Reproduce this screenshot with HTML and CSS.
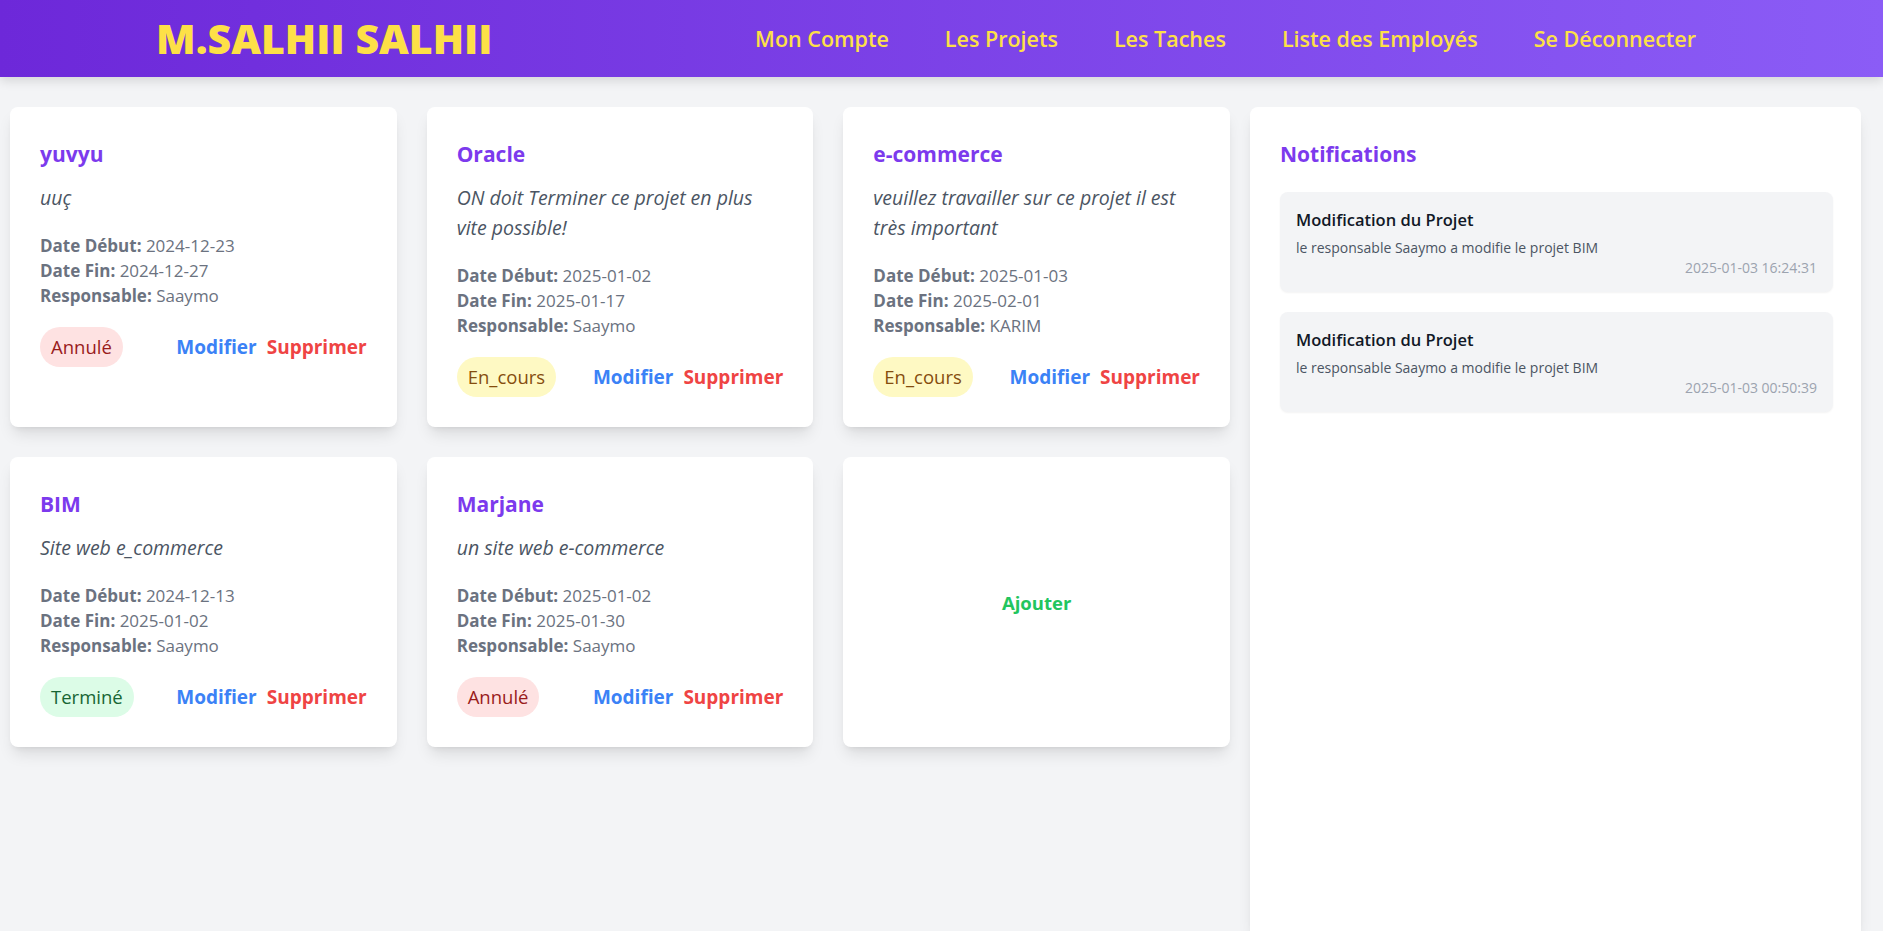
FILE: index.html
```html
<!DOCTYPE html>
<html lang="fr">
<head>
<meta charset="utf-8">
<title>Projets</title>
<link rel="stylesheet" href="styles.css">
</head>
<body>
<header class="topbar">
  <div class="logo">M.SALHII SALHII</div>
  <nav class="nav">
    <a href="#">Mon Compte</a>
    <a href="#">Les Projets</a>
    <a href="#">Les Taches</a>
    <a href="#">Liste des Employés</a>
    <a href="#">Se Déconnecter</a>
  </nav>
</header>
<main class="layout">
  <section class="grid">
    <article class="card">
      <h2 class="card-title">yuvyu</h2>
      <p class="card-desc">uuç</p>
      <div class="card-meta">
        <div><b>Date Début:</b> 2024-12-23</div>
        <div><b>Date Fin:</b> 2024-12-27</div>
        <div><b>Responsable:</b> Saaymo</div>
      </div>
      <div class="card-foot">
        <span class="pill pill-red">Annulé</span>
        <div class="actions"><a href="#" class="edit">Modifier</a><a href="#" class="del">Supprimer</a></div>
      </div>
    </article>
    <article class="card">
      <h2 class="card-title">Oracle</h2>
      <p class="card-desc">ON doit Terminer ce projet en plus vite possible!</p>
      <div class="card-meta">
        <div><b>Date Début:</b> 2025-01-02</div>
        <div><b>Date Fin:</b> 2025-01-17</div>
        <div><b>Responsable:</b> Saaymo</div>
      </div>
      <div class="card-foot">
        <span class="pill pill-yellow">En_cours</span>
        <div class="actions"><a href="#" class="edit">Modifier</a><a href="#" class="del">Supprimer</a></div>
      </div>
    </article>
    <article class="card">
      <h2 class="card-title">e-commerce</h2>
      <p class="card-desc">veuillez travailler sur ce projet il est très important</p>
      <div class="card-meta">
        <div><b>Date Début:</b> 2025-01-03</div>
        <div><b>Date Fin:</b> 2025-02-01</div>
        <div><b>Responsable:</b> KARIM</div>
      </div>
      <div class="card-foot">
        <span class="pill pill-yellow">En_cours</span>
        <div class="actions"><a href="#" class="edit">Modifier</a><a href="#" class="del">Supprimer</a></div>
      </div>
    </article>
    <article class="card">
      <h2 class="card-title">BIM</h2>
      <p class="card-desc">Site web e_commerce</p>
      <div class="card-meta">
        <div><b>Date Début:</b> 2024-12-13</div>
        <div><b>Date Fin:</b> 2025-01-02</div>
        <div><b>Responsable:</b> Saaymo</div>
      </div>
      <div class="card-foot">
        <span class="pill pill-green">Terminé</span>
        <div class="actions"><a href="#" class="edit">Modifier</a><a href="#" class="del">Supprimer</a></div>
      </div>
    </article>
    <article class="card">
      <h2 class="card-title">Marjane</h2>
      <p class="card-desc">un site web e-commerce</p>
      <div class="card-meta">
        <div><b>Date Début:</b> 2025-01-02</div>
        <div><b>Date Fin:</b> 2025-01-30</div>
        <div><b>Responsable:</b> Saaymo</div>
      </div>
      <div class="card-foot">
        <span class="pill pill-red">Annulé</span>
        <div class="actions"><a href="#" class="edit">Modifier</a><a href="#" class="del">Supprimer</a></div>
      </div>
    </article>
    <article class="card card-add">
      <a href="#" class="add">Ajouter</a>
    </article>
  </section>
  <aside class="panel">
    <h2 class="card-title">Notifications</h2>
    <div class="notes">
      <div class="note">
        <div class="note-title">Modification du Projet</div>
        <div class="note-text">le responsable Saaymo a modifie le projet BIM</div>
        <div class="note-date">2025-01-03 16:24:31</div>
      </div>
      <div class="note">
        <div class="note-title">Modification du Projet</div>
        <div class="note-text">le responsable Saaymo a modifie le projet BIM</div>
        <div class="note-date">2025-01-03 00:50:39</div>
      </div>
    </div>
  </aside>
</main>
</body>
</html>
```

FILE: styles.css
```css
* { box-sizing: border-box; }
html, body { margin: 0; padding: 0; }
body {
  background: #f3f4f6;
  font-family: "Open Sans", "Noto Sans", sans-serif;
  color: #111827;
  height: 931px;
  overflow: hidden;
}
a { text-decoration: none; }

.topbar {
  height: 77px;
  display: flex;
  align-items: center;
  justify-content: space-between;
  padding: 0 187px 0 156px;
  background: linear-gradient(to right, #6d28d9, #8b5cf6);
  box-shadow: 0 4px 10px rgba(0, 0, 0, 0.12);
  position: relative;
  z-index: 2;
}
.logo {
  font-size: 41px;
  font-weight: 800;
  color: #fde047;
  letter-spacing: 0;
  line-height: 1;
}
.nav { display: flex; gap: 56px; }
.nav a {
  font-size: 21.5px;
  font-weight: 600;
  color: #fde047;
}

.layout {
  display: flex;
  gap: 20px;
  padding: 30px 22px 0 10px;
}
.grid {
  width: 1220px;
  flex: none;
  display: grid;
  grid-template-columns: repeat(3, 1fr);
  gap: 30px;
  align-content: start;
}
.card {
  background: #fff;
  border-radius: 8px;
  padding: 30px;
  box-shadow: 0 10px 15px -3px rgba(0, 0, 0, 0.1), 0 4px 6px -4px rgba(0, 0, 0, 0.1);
}
.card-title {
  margin: 0 0 12px;
  font-size: 21px;
  line-height: 34px;
  font-weight: 700;
  color: #7c3aed;
}
.card-desc {
  margin: 0 0 20px;
  font-size: 19.5px;
  line-height: 30px;
  font-style: italic;
  color: #4b5563;
}
.card-meta {
  font-size: 17px;
  line-height: 25px;
  color: #6b7280;
}
.card-meta b { font-weight: 700; }
.card-foot {
  margin-top: 19px;
  display: flex;
  align-items: center;
  justify-content: space-between;
}
.pill {
  font-size: 18.5px;
  line-height: 28px;
  padding: 6px 11px;
  border-radius: 9999px;
}
.pill-red { background: #fee2e2; color: #991b1b; }
.pill-yellow { background: #fef9c3; color: #854d0e; }
.pill-green { background: #dcfce7; color: #166534; }
.actions { display: flex; gap: 10px; }
.actions a { font-size: 19px; font-weight: 700; }
.edit { color: #3b82f6; }
.del { color: #ef4444; }

.card-add {
  display: flex;
  align-items: center;
  justify-content: center;
}
.add { font-size: 18.5px; font-weight: 700; color: #22c55e; }

.panel {
  flex: 1;
  height: 824px;
  background: #fff;
  border-radius: 8px 8px 0 0;
  padding: 30px 28px 0 30px;
  box-shadow: 0 10px 15px -3px rgba(0, 0, 0, 0.1), 0 4px 6px -4px rgba(0, 0, 0, 0.1);
}
.panel .card-title { margin-bottom: 21px; }
.notes { display: flex; flex-direction: column; gap: 20px; }
.note {
  background: #f3f4f6;
  border-radius: 8px;
  padding: 16px;
  box-shadow: 0 1px 2px rgba(0, 0, 0, 0.05);
}
.note-title {
  font-size: 16.5px;
  line-height: 24px;
  font-weight: 600;
  color: #111827;
}
.note-text {
  margin-top: 4px;
  font-size: 14px;
  line-height: 23px;
  color: #4b5563;
}
.note-date {
  font-size: 14px;
  line-height: 17px;
  color: #9ca3af;
  text-align: right;
}
```
